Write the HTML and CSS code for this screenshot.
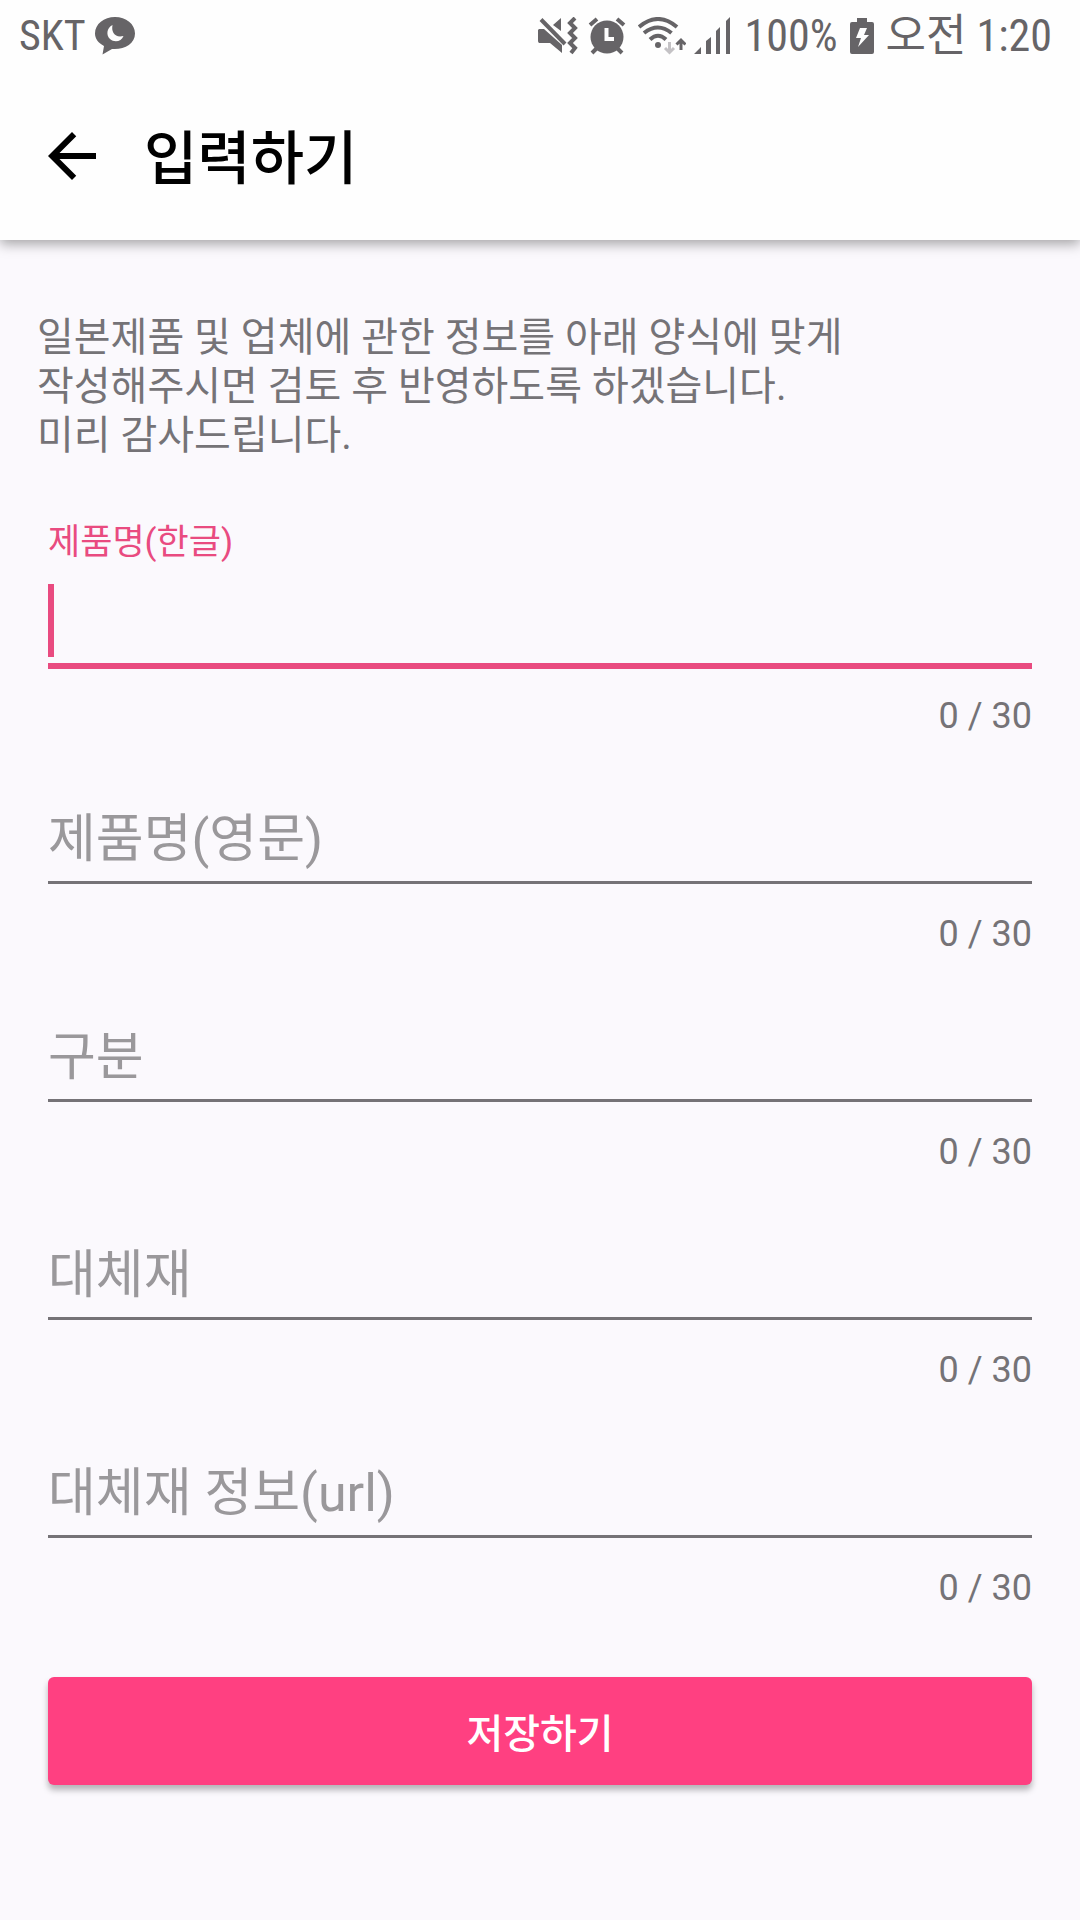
FILE: index.html
```html
<!DOCTYPE html>
<html lang="ko">
<head>
  <meta charset="UTF-8" />
  <meta name="viewport" content="width=device-width, initial-scale=1" />
  <title>입력하기</title>
  <link rel="stylesheet" href="styles.css">
</head>
<body>
  <header class="top">
    <div class="status">
      <span>SKT</span>
      <svg class="chat" width="40" height="40" viewBox="0 0 40 40">
        <path d="M20 1C9 1 0 8 0 17.500c0 5.500 3.500 9.500 9 12.500L7.500 38.500 17 33c12 1 23-5 23-15.500C40 8 31 1 20 1z"/>
        <path class="cut" d="M17.500 9c-6 3-6.500 10.500-2.500 14 4.500 4 11.500 2.500 13.500-3-5 1-8 0-10-3-1.500-2.500-1.500-5-1-8z"/>
      </svg>

      <div class="status-right">
        <svg class="mute" width="40" height="38" viewBox="0 0 40 38">
          <path d="M1 12h5l18 16v8L12 26H1q-1-1-1-2V13zM15 8l8-7v13z"/>
          <path class="line" d="M3 2.500 27 27"/>
          <path class="line" d="M37 1l-5 5 5 5-5 5 5 5-5 5 5 5-4 5"/>
        </svg>
        <svg class="alarm" width="38" height="38" viewBox="0 0 38 38">
          <circle cx="19" cy="20" r="16.500"/>
          <path class="line" d="M2 8l7-6M36 8l-7-6M4 36l6-6M34 36l-6-6"/>
          <path class="line-cut" d="M18.500 11v11H26"/>
        </svg>
        <svg class="wifi" width="48" height="38" viewBox="0 0 48 38">
          <path class="line" d="M1 10Q20-6 39 10M6 16Q20 5 33.500 16M12 22.500Q20 15 28 22.500"/>
          <circle cx="20" cy="28" r="3"/>
          <path class="line arrow faint" d="M31.500 25v10M27 31l4.500 4.500L36 31"/>
          <path class="line arrow" d="M43 33V23M38.500 27.500l4.500-4.500 4.500 4.500"/>
        </svg>
        <svg class="signal" width="36" height="38" viewBox="0 0 36 38">
          <path d="M0 37l7-7v7zM12 24l5-4v17h-5zM22 14l4-4v27h-4zM32 4l4-4v37h-4z"/>
        </svg>
        <span class="percent">100%</span>
        <svg class="battery" width="24" height="38" viewBox="0 0 24 38">
          <path d="M7 1h10v4h5q2 0 2 2v28q0 2-2 2H2q-2 0-2-2V7q0-2 2-2h5z"/>
          <path class="cut" d="M10 11h7l-3 7h5L8 30l3-9H6z"/>
        </svg>
        <span class="time">오전 1:20</span>
      </div>
    </div>

    <div class="toolbar">
      <button class="back" type="button" aria-label="뒤로">
        <svg width="72" height="72" viewBox="0 0 24 24">
          <path d="M20 11H7.830l5.590-5.590L12 4l-8 8 8 8 1.410-1.410L7.830 13H20z"/>
        </svg>
      </button>
      <h1>입력하기</h1>
    </div>
  </header>

  <main>
    <p class="guide">
      일본제품 및 업체에 관한 정보를 아래 양식에 맞게<br>
      작성해주시면 검토 후 반영하도록 하겠습니다.<br>
      미리 감사드립니다.
    </p>

    <form>
      <div class="field active">
        <label for="nameKo">제품명(한글)</label>
        <input type="text" id="nameKo" maxlength="30" />
        <span class="caret"></span>
        <span class="count">0 / 30</span>
      </div>
      <div class="field">
        <label for="nameEn">제품명(영문)</label>
        <input type="text" id="nameEn" maxlength="30" />
        <span class="count">0 / 30</span>
      </div>
      <div class="field">
        <label for="category">구분</label>
        <input type="text" id="category" maxlength="30" />
        <span class="count">0 / 30</span>
      </div>
      <div class="field">
        <label for="substitute">대체재</label>
        <input type="text" id="substitute" maxlength="30" />
        <span class="count">0 / 30</span>
      </div>
      <div class="field">
        <label for="substituteUrl">대체재 정보(url)</label>
        <input type="text" id="substituteUrl" maxlength="30" />
        <span class="count">0 / 30</span>
      </div>

      <button class="save" type="button">저장하기</button>
    </form>
  </main>
</body>
</html>
```

FILE: styles.css
```css
* {
  box-sizing: border-box;
}
body {
  margin: 0;
  min-height: 100vh;
  background-color: #fbf9fd;
  color: #757377;
  font-family: Roboto, "Noto Sans CJK KR", sans-serif;
}

/* status bar + toolbar */
.top {
  background-color: #fefefe;
  box-shadow: 0 4px 12px rgba(0, 0, 0, 0.35);
}
.status {
  display: flex;
  align-items: center;
  height: 72px;
  padding: 0 28px 0 19px;
  color: #666467;
  font-family: "Roboto Condensed", "Liberation Sans Narrow", Roboto, "Noto Sans CJK KR", sans-serif;
  font-size: 42px;
  line-height: 72px;
  white-space: nowrap;
}
.status svg {
  flex: none;
  fill: #666467;
}
.status .cut {
  fill: #fefefe;
}
.status .line,
.status .line-cut {
  fill: none;
  stroke: #666467;
  stroke-width: 4;
}
.status .line-cut {
  stroke: #fefefe;
}
.status .faint {
  stroke: #c4c2c5;
}
.status .arrow {
  stroke-width: 3;
}
.chat {
  margin-left: 9px;
}
.status-right {
  display: flex;
  align-items: center;
  margin-left: auto;
  font-size: 44px;
}
.alarm {
  margin-left: 10px;
}
.wifi {
  margin-left: 12px;
}
.signal {
  margin-left: 8px;
}
.percent {
  margin-left: 14px;
}
.battery {
  margin: 0 12px;
}
.toolbar {
  display: flex;
  align-items: center;
  height: 168px;
  padding: 0 36px;
}
.back {
  width: 72px;
  height: 72px;
  padding: 0;
  border: 0;
  background: none;
  cursor: pointer;
}
.back svg {
  display: block;
}
h1 {
  margin: 0 0 0 36px;
  padding-top: 5px;
  color: #000;
  font-size: 58px;
  font-weight: 500;
  line-height: 72px;
}

.guide {
  margin: 0;
  padding: 73px 37px 0;
  font-size: 40px;
  line-height: 49px;
}
form {
  padding: 60px 48px 0;
}

/* label sits on the input until the field is active */
.field {
  display: grid;
  grid-template-rows: 44px 105px auto;
}
.field label {
  grid-area: 2 / 1;
  z-index: 1;
  padding-top: 22px;
  color: #9a989b;
  font-size: 52px;
  line-height: 72px;
  pointer-events: none;
}
.field input {
  grid-area: 2 / 1;
  width: 100%;
  height: 102px;
  padding: 16px 0 0;
  border: 0;
  border-bottom: 3px solid #757377;
  border-radius: 0;
  outline: 0;
  background: none;
  color: #222;
  font: inherit;
  font-size: 52px;
}
.count {
  grid-row: 3;
  padding-top: 25px;
  font-size: 36px;
  line-height: 44px;
  text-align: right;
}
.active label {
  grid-row: 1;
  padding-top: 1px;
  color: #e94b80;
  font-size: 35px;
  line-height: 44px;
}
.active input {
  height: 105px;
  border-bottom: 6px solid #e94b80;
  caret-color: transparent;
}
.caret {
  grid-area: 2 / 1;
  width: 6px;
  height: 73px;
  margin-top: 20px;
  background-color: #e94b80;
}

.save {
  display: block;
  width: 100%;
  height: 108px;
  margin-top: 67px;
  border: 0;
  border-radius: 6px;
  background-color: #ff4081;
  box-shadow: 0 5px 6px rgba(0, 0, 0, 0.28);
  color: #fff;
  font-family: inherit;
  font-size: 40px;
  font-weight: 500;
  cursor: pointer;
}
```
